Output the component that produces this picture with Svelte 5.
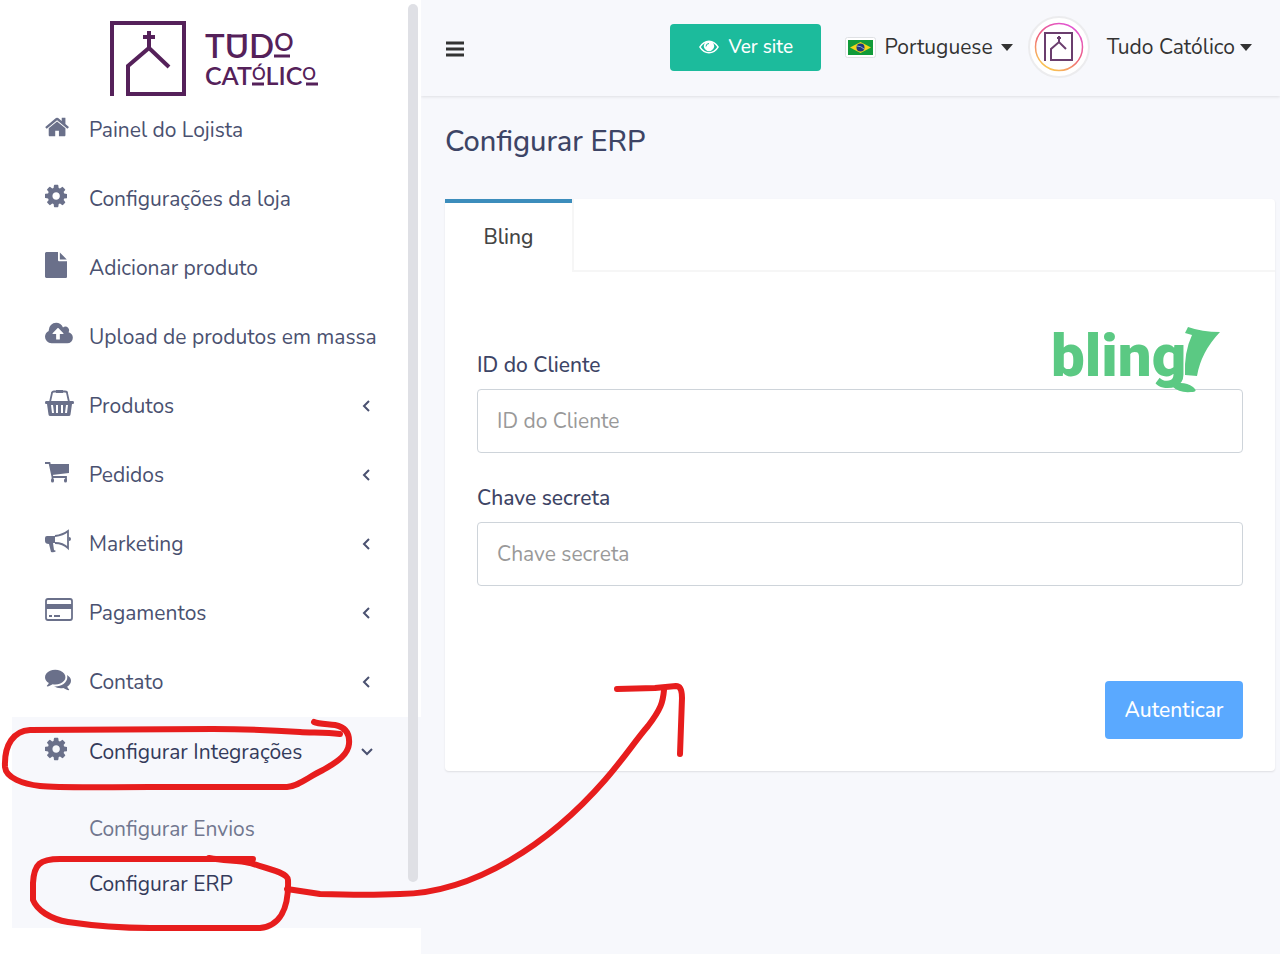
<script lang="ts">
  type Icon = { box: string; d: string; line?: string }

  const icons: Record<string, Icon> = {
    home: {
      box: '64 0 1664 1792',
      d: 'M1472 992v480q0 26-19 45t-45 19h-384v-384h-256v384h-384q-26 0-45-19t-19-45v-480q0-1 .5-3t.5-3l575-474 575 474q1 2 1 6zm223-69l-62 74q-8 9-21 11h-3q-13 0-21-7l-692-577-692 577q-12 8-24 7-13-2-21-11l-62-74q-8-10-7-23.5t11-21.5l719-599q32-26 76-26t76 26l244 204v-195q0-14 9-23t23-9h192q14 0 23 9t9 23v408l219 182q10 8 11 21.5t-7 23.5z'
    },
    cog: {
      box: '128 0 1536 1792',
      d: 'M1152 896q0-106-75-181t-181-75-181 75-75 181 75 181 181 75 181-75 75-181zm512-109v222q0 12-8 23t-20 13l-185 28q-19 54-39 91 35 50 107 138 10 12 10 25t-9 23q-27 37-99 108t-94 71q-12 0-26-9l-138-108q-44 23-91 38-16 136-29 186-7 28-36 28h-222q-14 0-24.5-8.5t-11.5-21.5l-28-184q-49-16-90-37l-141 107q-10 9-25 9-14 0-25-11-126-114-165-168-7-10-7-23 0-12 8-23 15-21 51-66.5t54-70.5q-27-50-41-99l-183-27q-13-2-21-12.5t-8-23.5v-222q0-12 8-23t19-13l186-28q14-46 39-92-40-57-107-138-10-12-10-24 0-10 9-23 26-36 98.5-107.5t94.5-71.5q13 0 26 10l138 107q44-23 91-38 16-136 29-186 7-28 36-28h222q14 0 24.5 8.5t11.5 21.5l28 184q49 16 90 37l142-107q9-9 24-9 13 0 25 10 129 119 165 170 7 8 7 22 0 12-8 23-15 21-51 66.5t-54 70.5q26 50 41 98l183 28q13 2 21 12.5t8 23.5z'
    },
    file: {
      box: '128 0 1536 1792',
      d: 'M1152 512v-472q22 14 36 28l408 408q14 14 28 36h-472zm-128 32q0 40 28 68t68 28h544v1056q0 40-28 68t-68 28h-1344q-40 0-68-28t-28-68v-1600q0-40 28-68t68-28h800v544z'
    },
    upload: {
      box: '-64 0 1920 1792',
      d: 'M1216 864q0-14-9-23l-352-352q-9-9-23-9t-23 9l-351 351q-10 12-10 24 0 14 9 23t23 9h224v352q0 13 9.5 22.5t22.5 9.5h192q13 0 22.5-9.5t9.5-22.5v-352h224q13 0 22.5-9.5t9.5-22.5zm640 288q0 159-112.5 271.5t-271.5 112.5h-1088q-185 0-316.5-131.5t-131.5-316.5q0-130 70-240t188-165q-2-30-2-43 0-212 150-362t362-150q156 0 285.5 87t188.5 231q71-62 166-62 106 0 181 75t75 181q0 76-41 138 130 31 213.5 135.5t83.5 238.5z'
    },
    basket: {
      box: '0 0 29 26',
      d: 'M1 11h27q1 0 1 1.500t-1 1.500h-1l-1.500 10.500q0 1.500-2 1.500h-18q-2 0-2-1.500L2 14H1q-1 0-1-1.500T1 11zM6 15l1 8h2l-1-8zM11 15v8h2v-8zM16 15v8h2v-8zM21 15l-1 8h2l1-8zM11 0h7v3h-7z',
      line: 'M5 12L7 3q0-1.500 2-1.500h11q2 0 2 1.500l2 9'
    },
    cart: {
      box: '0 0 26 26',
      d: 'M5 5h19v9L7 16zM6 21a1.500 1.500 0 0 1 3 0v1a1.500 1.500 0 0 1-3 0zM19 21a1.500 1.500 0 0 1 3 0v1a1.500 1.500 0 0 1-3 0z',
      line: 'M0 4h4.500l3 14M7.500 21v-3H21v3'
    },
    horn: {
      box: '0 0 26 26',
      d: 'M2 8h8v7H8l1 7 2 1q-2 2-5 1L4 16Q0 16 0 13v-3q0-2 2-2zM24 9q2 0 2 2t-2 2z',
      line: 'M10 8q8-1 13-5v17q-5-5-13-5'
    },
    card: {
      box: '0 0 28 26',
      d: 'M1 7h26v5H1zM4 18h3v2H4zM9 18h6v2H9z',
      line: 'M3 2h22q2 0 2 2v17q0 2-2 2H3q-2 0-2-2V4q0-2 2-2z'
    },
    comments: {
      box: '0 0 1792 1792',
      d: 'M1408 768q0 139-94 257t-256.5 186.5-353.5 68.5q-86 0-176-16-124 88-278 128-36 9-86 16h-3q-11 0-20.5-8t-11.5-21q-1-3-1-6.5t.5-6.5 2-6l2.5-5 3.5-5.5 4-5 4.5-5 4-4.5q5-6 23-25t26-29.5 22.5-29 25-38.5 20.5-44q-124-72-195-177t-71-224q0-139 94-257t256.5-186.5 353.5-68.5 353.5 68.5 256.5 186.5 94 257zm384 256q0 120-71 224.5t-195 176.5q10 24 20.5 44t25 38.5 22.5 29 26 29.5 23 25q1 1 4 4.5t4.5 5 4 5 3.5 5.5l2.5 5 2 6 .5 6.5-1 6.5q-3 14-13 22t-22 7q-50-7-86-16-154-40-278-128-90 16-176 16-271 0-472-132 58 4 88 4 161 0 309-45t264-129q125-92 192-212t67-254q0-77-23-152 129 71 204 178t75 230z'
    }
  }

  const menu = [
    { label: 'Painel do Lojista', icon: 'home' },
    { label: 'Configurações da loja', icon: 'cog' },
    { label: 'Adicionar produto', icon: 'file' },
    { label: 'Upload de produtos em massa', icon: 'upload' },
    { label: 'Produtos', icon: 'basket', sub: true },
    { label: 'Pedidos', icon: 'cart', sub: true },
    { label: 'Marketing', icon: 'horn', sub: true },
    { label: 'Pagamentos', icon: 'card', sub: true },
    { label: 'Contato', icon: 'comments', sub: true }
  ]

  let open = $state(true)
  let clientId = $state('')
  let secret = $state('')
</script>

{#snippet menuIcon(name: string)}
  <span class="icon">
    <svg viewBox={icons[name].box} aria-hidden="true">
      <path d={icons[name].d} fill="currentColor" fill-rule="evenodd" />
      {#if icons[name].line}
        <path d={icons[name].line} fill="none" stroke="currentColor" stroke-width="1.8" />
      {/if}
    </svg>
  </span>
{/snippet}

<div class="layout">
  <aside class="sidebar">
    <a class="brand" href="#inicio" aria-label="Tudo Católico">
      <svg width="212" height="76" viewBox="0 0 212 76">
        <path d="M3 76V3h72v71H19V46L40 28l20 19M40 30V11M34 17h12" fill="none" stroke="currentColor" stroke-width="4" />
        <g class="brand-text">
          <text x="96" y="38" font-size="33">TUD<tspan font-size="24" dy="-7">O</tspan></text>
          <text x="96" y="65" font-size="25">CAT<tspan font-size="17" dy="-5">Ó</tspan><tspan dy="5">LIC</tspan><tspan font-size="17" dy="-5">O</tspan></text>
        </g>
        <path d="M120 16h16M165 36h16M143 64h12M197 64h12" stroke="currentColor" stroke-width="3" />
      </svg>
    </a>

    <nav>
      {#each menu as item}
        <a class="item" href="#menu">
          {@render menuIcon(item.icon)}
          <span class="label">{item.label}</span>
          {#if item.sub}
            <svg class="arrow" viewBox="0 0 12 12"><path d="M8 1L3 6l5 5" /></svg>
          {/if}
        </a>
      {/each}

      <div class="group">
        <button class="item current" aria-expanded={open} onclick={() => (open = !open)}>
          {@render menuIcon('cog')}
          <span class="label">Configurar Integrações</span>
          <svg class="arrow" viewBox="0 0 12 12"><path d="M1 3l5 5 5-5" /></svg>
        </button>
        {#if open}
          <div class="submenu">
            <a href="#envios">Configurar Envios</a>
            <a class="active" href="#erp">Configurar ERP</a>
          </div>
        {/if}
      </div>
    </nav>
    <div class="scrollbar"></div>
  </aside>

  <div class="main">
    <header>
      <button class="toggle" aria-label="Menu">
        <svg width="18" height="20" viewBox="0 0 18 20"><path d="M0 6h18M0 12h18M0 18h18" stroke="#333" stroke-width="3" /></svg>
      </button>
      <a class="visit" href="#site">
        <svg width="20" height="20" viewBox="0 0 20 20">
          <path d="M0 10Q4 3.500 10 3.500T20 10Q16 16.500 10 16.500T0 10zM1.800 10Q5 15 10 15T18.200 10Q16.500 7.300 14 6a5 5 0 1 1-8 0Q3.500 7.300 1.800 10z" fill="currentColor" fill-rule="evenodd" />
          <path d="M7 9.500Q7 6.500 10 6.500" fill="none" stroke="#1cbb9c" />
        </svg>
        Ver site
      </a>
      <button class="dropdown lang">
        <svg class="flag" width="31" height="21" viewBox="0 0 31 21">
          <rect x="0.5" y="0.5" width="30" height="20" rx="2" fill="#fff" stroke="#dfe1e4" />
          <path d="M3 3h25v15H3z" fill="#119b3a" />
          <path d="M5 10.500L15.500 5 26 10.500 15.500 16z" fill="#f2d51b" />
          <circle cx="15.500" cy="10.500" r="4" fill="#20377f" />
          <path d="M12 9q4 0 7 3" fill="none" stroke="#8fa6c9" />
        </svg>
        <span>Portuguese</span>
        <i class="caret"></i>
      </button>
      <button class="dropdown user">
        <svg width="62" height="62" viewBox="0 0 62 62">
          <defs>
            <linearGradient id="ring" x1="0.2" y1="1" x2="0.8" y2="0">
              <stop offset="0" stop-color="#fbd34e" />
              <stop offset="0.5" stop-color="#ee5f7c" />
              <stop offset="1" stop-color="#e052dc" />
            </linearGradient>
          </defs>
          <circle cx="31" cy="31" r="30" fill="#fff" stroke="#ececee" stroke-width="2" />
          <circle cx="31" cy="31" r="23.5" fill="none" stroke="url(#ring)" stroke-width="1.5" />
          <path d="M17 45V17h27v27H23V33l8-7 7 7M31 26v-6M29 22h4" fill="none" stroke="#6b3e6e" stroke-width="2" />
        </svg>
        <span>Tudo Católico</span>
        <i class="caret"></i>
      </button>
    </header>

    <main>
      <h1>Configurar ERP</h1>
      <section class="card">
        <div class="tabs" role="tablist">
          <button class="tab" role="tab" aria-selected="true">Bling</button>
          <div class="tab-rest"></div>
        </div>
        <form onsubmit={(e) => e.preventDefault()}>
          <svg class="bling" width="170" height="68" viewBox="0 0 170 68" fill="#5bc983">
            <text x="0" y="50" font-size="60">bling</text>
            <path d="M137 1q14 5 32 5-19 20-23 44l-12-1q-1-23 7-40l-7-2zM122 58q12-3 20 3 6 5-2 5-12 1-18-5z" />
          </svg>
          <label for="client">ID do Cliente</label>
          <input id="client" type="text" placeholder="ID do Cliente" bind:value={clientId} />
          <label for="secret">Chave secreta</label>
          <input id="secret" type="text" placeholder="Chave secreta" bind:value={secret} />
          <div class="actions">
            <button class="submit" type="submit">Autenticar</button>
          </div>
        </form>
      </section>
    </main>
  </div>

  <!-- hand-drawn pointer to the ERP form -->
  <svg class="marker" width="700" height="954" viewBox="0 0 700 954" aria-hidden="true">
    <path d="M340 734C325 732 310 733 300 732C270 730 235 729 213 729L30 730C14 731 4 744 5 767C6 778 23 784 40 786C60 788 100 787 150 787L287 787C299 786 308 777 323 770C339 761 348 754 349 744C350 733 345 727 335 725C327 724 318 724 314 722" />
    <path d="M253 859H60C40 859 34 864 33 883V900C37 910 50 919 68 922C95 926 115 928 150 928H260C280 926 289 908 288 880C288 873 270 869 250 863C238 860 225 861 209 858" />
    <path d="M287 889L320 894C350 895 380 895 400 894C475 893 550 843 605 780C625 757 635 741 648 726C661 709 663 702 664 690" />
    <path d="M617 689L655 688L676 686Q682 686 682 698L680 754" />
  </svg>
</div>

<style>
  :global(body) {
    margin: 0;
    background: #f7f8fc;
    font-family: Nunito, Lato, 'Open Sans', sans-serif;
    font-size: 21px;
    color: #3d4465;
  }

  a {
    color: inherit;
    text-decoration: none;
  }

  button {
    font: inherit;
    color: inherit;
    background: none;
    border: 0;
    padding: 0;
    cursor: pointer;
  }

  .layout {
    position: relative;
    display: flex;
    min-height: 100vh;
    overflow: hidden;
  }

  .sidebar {
    position: relative;
    box-sizing: border-box;
    flex: 0 0 421px;
    min-width: 0;
    padding-left: 12px;
    background: #fff;
  }

  .brand {
    display: block;
    height: 75px;
    padding: 20px 0 0 97px;
    color: #55215a;
  }

  .brand svg {
    display: block;
  }

  .brand-text {
    font-family: Lato, sans-serif;
    font-weight: 600;
    fill: currentColor;
  }

  .item {
    box-sizing: border-box;
    display: flex;
    align-items: center;
    width: 100%;
    height: 69px;
    padding: 0 48px 0 33px;
    color: #4a5170;
    text-align: left;
    white-space: nowrap;
  }

  .icon {
    flex: 0 0 44px;
    height: 32px;
    color: #6a708a;
  }

  .icon svg {
    display: block;
    height: 26px;
  }

  .label {
    flex: 1;
    min-width: 0;
  }

  .arrow {
    width: 12px;
    height: 12px;
    fill: none;
    stroke: #4a5170;
    stroke-width: 2;
  }

  .group {
    margin-top: 1px;
    background: #f7f8fc;
  }

  .item.current,
  .submenu .active {
    color: #343b5b;
  }

  .submenu {
    padding: 16px 0 16px 77px;
    color: #71778f;
  }

  .submenu a {
    display: block;
    line-height: 55px;
  }

  .scrollbar {
    position: absolute;
    top: 4px;
    right: 3px;
    width: 10px;
    height: 92%;
    border-radius: 5px;
    background: #dfe0e5;
  }

  .main {
    flex: 1;
    min-width: 0;
  }

  header {
    box-sizing: border-box;
    display: flex;
    align-items: center;
    height: 96px;
    padding: 0 28px 2px 25px;
    color: #333;
    box-shadow: 0 1px 3px rgba(0, 0, 0, 0.1);
  }

  .toggle {
    display: flex;
    margin-right: auto;
  }

  .visit {
    box-sizing: border-box;
    display: flex;
    align-items: center;
    justify-content: center;
    gap: 10px;
    width: 151px;
    height: 47px;
    border-radius: 4px;
    background: #1cbb9c;
    color: #fff;
    font-size: 19px;
    font-weight: 500;
  }

  .dropdown {
    display: flex;
    align-items: center;
  }

  .lang {
    gap: 8px;
    margin: 0 15px 0 24px;
  }

  .user span {
    margin: 0 5px 0 17px;
  }

  .caret {
    border: 6px solid transparent;
    border-top: 7px solid #333;
    border-bottom: 0;
  }

  main {
    padding: 24px 5px 24px 24px;
  }

  h1 {
    margin: 0 0 35px;
    font-size: 29px;
    font-weight: 500;
    line-height: 44px;
  }

  .card {
    background: #fff;
    border-radius: 4px;
    box-shadow: 0 1px 2px rgba(0, 0, 0, 0.1);
  }

  .tabs {
    display: flex;
    height: 73px;
  }

  .tab {
    flex: 0 0 129px;
    padding-top: 2px;
    border-right: 2px solid #f6f6f6;
    background: linear-gradient(#3c8dbc 4px, #fff 4px);
    color: #444;
    font-weight: 500;
  }

  .tab-rest {
    flex: 1;
    border-bottom: 2px solid #f6f6f6;
  }

  form {
    position: relative;
    padding: 76px 32px 32px;
  }

  .bling {
    position: absolute;
    top: 54px;
    right: 54px;
    overflow: visible;
    font-family: Roboto, sans-serif;
    font-weight: 900;
  }

  label {
    display: block;
    margin-bottom: 8px;
    padding-top: 1px;
    font-weight: 500;
    line-height: 32px;
  }

  input {
    box-sizing: border-box;
    display: block;
    width: 100%;
    height: 64px;
    margin-bottom: 28px;
    padding: 0 19px;
    border: 1px solid #ced4da;
    border-radius: 4px;
    background: transparent;
    font: inherit;
    color: #444;
  }

  input::placeholder {
    color: #999;
    opacity: 1;
  }

  .actions {
    display: flex;
    justify-content: flex-end;
    padding-top: 67px;
  }

  .submit {
    width: 138px;
    height: 58px;
    border-radius: 4px;
    background: #5aa9ff;
    color: #fff;
    font-weight: 500;
  }

  .marker {
    position: absolute;
    top: 0;
    left: 0;
    fill: none;
    stroke: #e71d1d;
    stroke-width: 6;
    stroke-linecap: round;
    stroke-linejoin: round;
    pointer-events: none;
  }
</style>
